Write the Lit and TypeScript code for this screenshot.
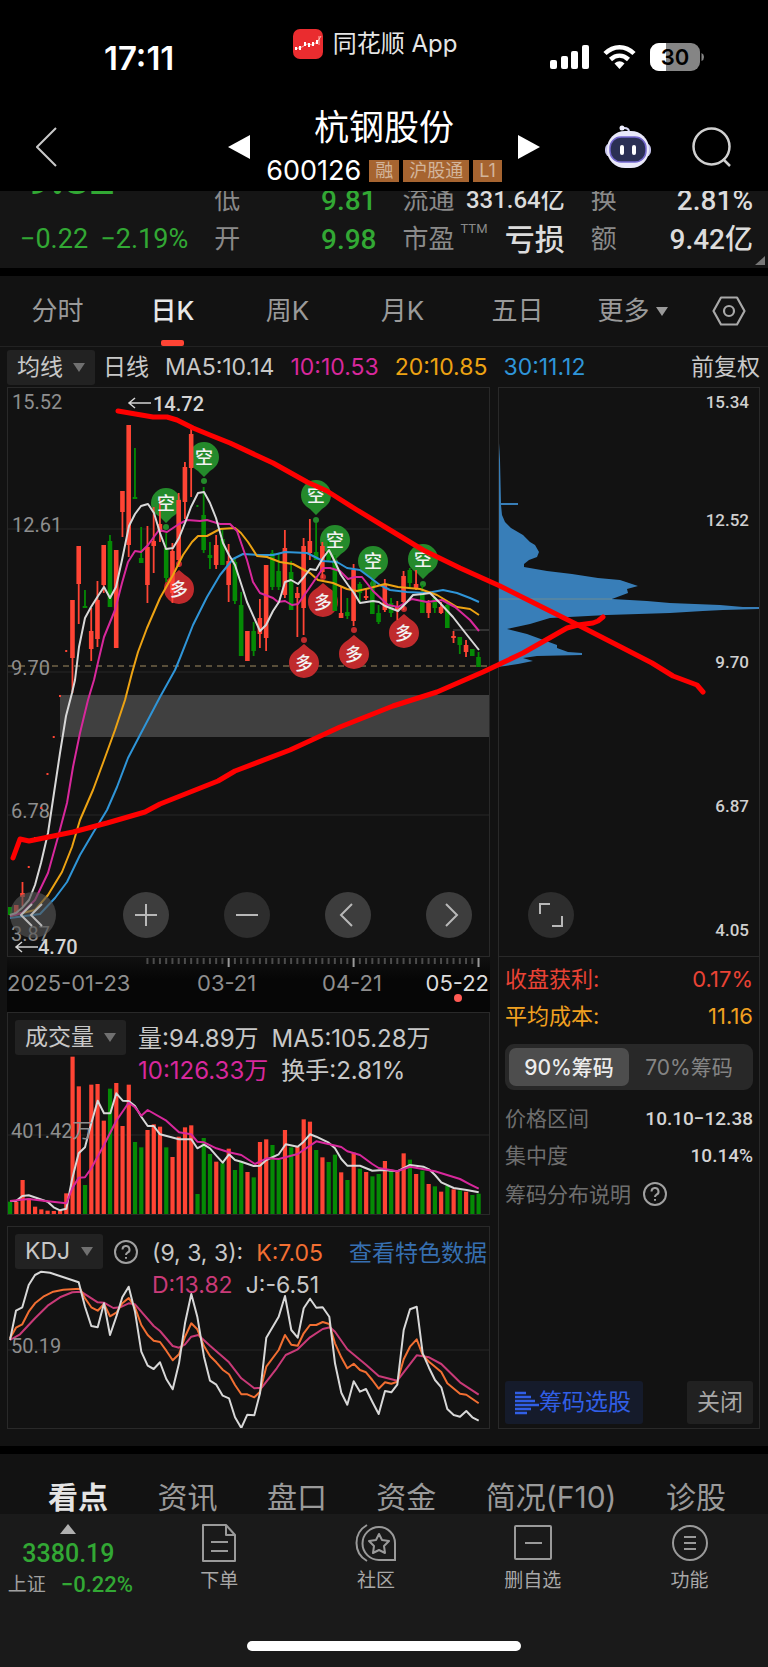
import { LitElement, html, svg, css } from "lit";
import { customElement, property, state } from "lit/decorators.js";
import { classMap } from "lit/directives/class-map.js";

type Point = [number, number];

const STEP = 6.247;
const barX = (i: number) => 10 + STEP * i;
const join = (points: Point[]) => points.map((p) => p.join(",")).join(" ");
/** Parses "x,y x,y" written in thirds of a pixel and moves it down by top. */
const thirds = (text: string, top: number) =>
  text
    .split(" ")
    .map((pair) => pair.split(",").map(Number))
    .map(([x, y]) => `${(x / 3).toFixed(1)},${(top + y / 3).toFixed(1)}`)
    .join(" ");

/* index, up/down, high, body top, body bottom, low */
const CANDLES: [number, "r" | "g", number, number, number, number][] = [
  [0, "g", 907, 907, 915, 915], [1, "r", 905, 905, 915, 915], [2, "r", 882, 893, 897, 906],
  [10, "r", 600, 600, 658, 693], [11, "r", 546, 546, 584, 624], [12, "g", 590, 606, 607, 608],
  [13, "r", 608, 631, 649, 661], [14, "r", 581, 600, 639, 647], [15, "r", 545, 545, 585, 593],
  [16, "g", 535, 541, 607, 607], [17, "r", 550, 550, 648, 648], [18, "r", 491, 491, 512, 537],
  [19, "r", 425, 425, 545, 557], [20, "g", 448, 497, 499, 499], [21, "g", 527, 558, 563, 563],
  [22, "r", 526, 547, 585, 603], [23, "r", 507, 541, 546, 573], [24, "r", 497, 524, 532, 542],
  [25, "g", 533, 548, 578, 582], [26, "r", 543, 551, 593, 603], [27, "r", 493, 500, 560, 567],
  [28, "r", 462, 467, 502, 519], [29, "r", 429, 434, 468, 497], [31, "g", 487, 515, 550, 553],
  [32, "g", 542, 555, 558, 569], [33, "r", 535, 545, 565, 569], [34, "g", 530, 539, 565, 565],
  [35, "r", 544, 561, 585, 602], [36, "g", 557, 562, 601, 604], [37, "g", 592, 605, 656, 656],
  [38, "r", 631, 631, 661, 661], [39, "g", 622, 631, 651, 656], [40, "r", 599, 618, 634, 648],
  [41, "r", 565, 565, 638, 651], [42, "g", 550, 553, 587, 590], [43, "g", 553, 571, 587, 590],
  [44, "r", 530, 548, 595, 598], [45, "g", 561, 572, 610, 610], [46, "r", 587, 593, 598, 637],
  [47, "r", 538, 546, 608, 635], [48, "r", 519, 541, 553, 560], [49, "g", 523, 552, 560, 560],
  [50, "r", 542, 546, 572, 578], [51, "g", 540, 550, 560, 562], [52, "g", 555, 562, 611, 611],
  [53, "r", 587, 613, 618, 618], [54, "g", 598, 612, 616, 619], [55, "r", 564, 570, 621, 626],
  [56, "g", 582, 584, 593, 603], [57, "r", 588, 596, 597, 600], [58, "g", 578, 587, 614, 614],
  [59, "g", 605, 613, 622, 624], [60, "r", 579, 585, 610, 612], [61, "g", 598, 603, 613, 617],
  [62, "r", 601, 607, 610, 620], [63, "r", 571, 576, 602, 610], [64, "g", 568, 570, 583, 587],
  [65, "r", 570, 584, 588, 590], [66, "g", 585, 592, 613, 613], [67, "r", 600, 603, 613, 618],
  [68, "g", 597, 598, 608, 613], [69, "r", 602, 607, 613, 614], [70, "g", 603, 605, 628, 628],
  [71, "r", 631, 636, 638, 643], [72, "g", 637, 637, 645, 654], [73, "r", 640, 645, 652, 657],
  [74, "g", 649, 649, 656, 656], [75, "g", 652, 657, 667, 667],
];

const LIMIT_DOTS: [number, number, "r" | "g"][] = [
  [3, 867, "r"], [4, 838, "r"], [5, 808, "r"], [6, 774, "r"], [7, 737, "r"],
  [8, 696, "r"], [9, 651, "r"], [30, 506, "g"],
];

const MA: Record<string, Point[]> = {
  ma30: [[10, 918], [40, 914], [55, 898], [67, 882], [80, 855], [93, 833], [107, 810], [117, 787], [128, 758], [140, 735], [160, 697], [175, 670], [180, 658], [193, 625], [207, 597], [220, 575], [233, 559], [243, 554], [260, 555], [273, 555], [285, 552], [307, 553], [323, 561], [337, 562], [347, 568], [360, 570], [368, 576], [380, 585], [390, 590], [407, 592], [427, 593], [443, 590], [457, 593], [470, 598], [479, 602]],
  ma20: [[10, 916], [35, 910], [48, 895], [62, 872], [72, 847], [80, 820], [93, 790], [103, 763], [115, 730], [125, 700], [132, 673], [138, 652], [147, 628], [160, 598], [173, 575], [183, 555], [192, 542], [198, 536], [207, 536], [220, 529], [235, 528], [241, 533], [248, 542], [257, 556], [267, 557], [280, 562], [293, 564], [310, 573], [318, 580], [333, 583], [347, 589], [357, 591], [370, 588], [385, 584], [398, 587], [420, 589], [437, 595], [457, 607], [470, 609], [479, 615]],
  ma10: [[10, 916], [22, 913], [35, 900], [48, 873], [58, 837], [67, 803], [73, 767], [80, 733], [88, 700], [94, 680], [99, 658], [104, 637], [115, 610], [122, 583], [128, 562], [135, 551], [141, 552], [148, 545], [159, 530], [167, 532], [179, 524], [187, 520], [200, 521], [207, 520], [220, 524], [230, 524], [237, 531], [247, 560], [253, 582], [260, 593], [273, 598], [278, 602], [285, 601], [292, 605], [298, 604], [310, 587], [323, 568], [330, 568], [340, 571], [348, 579], [355, 577], [362, 577], [373, 591], [388, 605], [398, 607], [412, 599], [427, 602], [442, 600], [455, 607], [470, 620], [479, 631]],
  ma5: [[10, 915], [16, 913], [22, 908], [29, 900], [35, 885], [41, 863], [48, 833], [54, 793], [60, 753], [66, 716], [72, 693], [75, 680], [79, 647], [85, 618], [91, 607], [98, 596], [104, 587], [110, 598], [116, 587], [122, 560], [129, 526], [135, 514], [141, 506], [148, 504], [154, 513], [160, 533], [166, 549], [173, 548], [179, 538], [185, 523], [191, 507], [198, 493], [204, 492], [210, 503], [216, 518], [223, 543], [229, 555], [235, 565], [247, 602], [260, 631], [266, 625], [273, 611], [279, 602], [285, 582], [291, 580], [298, 584], [304, 577], [310, 569], [316, 570], [323, 558], [329, 550], [335, 562], [341, 575], [348, 585], [354, 593], [360, 603], [373, 601], [379, 602], [385, 606], [398, 611], [407, 602], [413, 595], [423, 594], [430, 593], [440, 603], [453, 617], [467, 635], [479, 650]],
};

const SHORT_PINS: [number, number, number][] = [
  [204, 457, 481], [166, 503, 527], [316, 495, 520], [335, 540, 562], [373, 561, 584], [423, 559, 584],
];
const LONG_PINS: [number, number, number][] = [
  [179, 589, 564], [323, 602, 577], [304, 663, 640], [354, 654, 630], [404, 633, 609],
];

const CHIPS: Point[] = [
  [498, 443], [499, 443], [500, 460], [501, 503], [518, 503], [518, 505], [501, 505], [502, 515], [505, 522],
  [511, 528], [523, 535], [530, 542], [535, 545], [539, 552], [537, 557], [529, 560], [524, 564], [524, 567],
  [547, 571], [572, 574], [598, 578], [620, 580], [638, 586], [627, 589], [628, 593], [612, 599], [647, 601],
  [670, 603], [720, 605], [743, 607], [759, 607], [759, 609], [723, 610], [703, 611], [670, 613], [607, 615],
  [550, 618], [530, 624], [507, 629], [527, 634], [557, 645], [557, 648], [568, 652], [582, 653], [582, 655],
  [537, 656], [523, 658], [533, 661], [518, 664], [505, 666], [498, 667],
];

const TREND_DOWN: Point[] = [[118, 411], [153, 417], [167, 417], [177, 420], [193, 428], [210, 435], [230, 443], [260, 457], [273, 463], [307, 482], [327, 491], [357, 510], [390, 530], [423, 550], [460, 568], [500, 586], [528, 600], [578, 625], [617, 645], [652, 663], [673, 676], [697, 685], [703, 692]];
const TREND_UP: Point[] = [[13, 858], [20, 839], [29, 841], [73, 832], [107, 823], [145, 812], [160, 804], [218, 781], [235, 771], [290, 750], [340, 727], [393, 706], [437, 692], [483, 672], [523, 653], [567, 628], [578, 625], [593, 623], [598, 621], [603, 617]];

/* bar tops in thirds of a pixel, g marks a falling day */
const VOLUME =
  "g575 r575 r510 r565 r590 r598 r602 r603 r602 r550 r140 r229 g525 r224 r222 r332 g236 r219 r348 r224 g396 g412 r360 r343 r350 g412 r441 r380 r352 r346 g552 g384 g432 r455 g460 r416 g480 g456 r486 g502 r396 r388 g405 g450 r360 g412 r410 r328 r335 g420 r442 g456 g434 r487 g510 r428 g476 r486 g499 g492 r453 g482 r486 r430 g449 r492 g482 r522 g529 r545 g528 r538 g541 r545 g555 g551".split(" ");
const VOLUME_MA5 =
  "30,573 48,573 67,558 86,556 143,575 161,592 180,601 199,596 217,505 236,430 255,412 274,340 293,272 312,310 331,310 349,250 368,272 386,273 405,288 424,320 443,348 461,348 480,373 537,388 574,388 592,415 612,404 630,415 649,437 668,458 687,433 705,450 724,455 761,468 780,467 799,450 836,433 857,403 893,410 911,395 930,373 949,380 986,398 1005,415 1024,447 1042,467 1080,467 1117,482 1150,480 1192,484 1230,465 1270,470 1287,478 1305,495 1324,517 1361,534 1400,540 1436,547";
const VOLUME_MA10 =
  "30,573 86,567 130,572 199,580 217,535 236,503 255,502 274,475 312,405 349,332 386,278 405,292 424,317 443,300 499,332 537,367 574,373 592,395 612,397 649,415 687,427 724,435 765,462 800,445 836,447 893,432 949,394 1024,411 1042,424 1080,435 1117,462 1136,474 1192,484 1230,470 1305,484 1380,507 1410,523 1436,536";
const KDJ_J =
  "30,360 48,272 67,262 86,195 105,165 124,155 150,158 236,187 255,260 274,318 293,322 312,250 330,345 349,290 367,232 386,200 405,275 424,395 443,437 461,447 480,427 499,477 518,508 537,430 555,310 574,222 592,290 612,410 630,482 649,494 668,527 687,535 705,592 724,624 742,584 763,586 780,520 799,353 836,290 855,228 874,330 893,353 911,265 930,236 949,263 968,262 988,290 1005,430 1024,518 1042,554 1061,484 1080,515 1098,507 1117,545 1136,582 1155,513 1174,517 1192,494 1211,330 1230,268 1250,260 1268,400 1287,443 1305,480 1324,502 1342,567 1361,585 1380,590 1399,573 1417,592 1436,602";
const KDJ_K =
  "30,355 48,323 67,313 86,275 105,250 130,230 160,215 190,209 240,206 255,235 274,262 293,272 312,252 330,289 349,278 367,250 386,234 405,262 424,315 443,345 461,362 480,366 499,392 518,421 537,403 555,350 574,310 592,328 612,378 630,408 649,427 668,449 687,463 705,495 724,523 742,523 763,532 780,515 799,440 836,390 855,345 874,374 893,377 911,340 930,315 949,315 968,306 988,312 1005,370 1024,412 1042,445 1061,431 1080,450 1098,457 1117,480 1136,506 1155,487 1174,491 1192,485 1211,418 1230,380 1250,358 1268,405 1287,425 1324,456 1342,490 1380,521 1399,524 1436,550";
const KDJ_D =
  "30,360 60,343 105,295 143,257 180,232 217,217 243,215 293,247 312,248 340,264 360,262 386,250 405,253 461,318 480,333 518,378 537,383 555,373 574,350 595,345 630,377 687,427 724,475 763,505 785,503 830,445 857,405 893,388 930,352 968,327 990,322 1005,335 1042,388 1098,434 1136,468 1192,482 1250,406 1287,412 1324,432 1380,487 1436,524";

const base = css`
  * {
    box-sizing: border-box;
  }
  button,
  select {
    margin: 0;
    padding: 0;
    border: 0;
    background: none;
    color: inherit;
    font: inherit;
  }
  svg {
    display: block;
  }
  a {
    color: inherit;
    text-decoration: none;
  }
`;

const chartStyles = css`
  :host {
    display: block;
  }
  .chart {
    width: 100%;
    height: auto;
    font-family: Roboto, "Noto Sans CJK SC", sans-serif;
  }
  .grid {
    stroke: #262626;
    stroke-width: 1;
  }
  .line {
    fill: none;
    stroke-width: 2;
    stroke-linejoin: round;
  }
  .r {
    fill: #ff4434;
    stroke: #ff4434;
  }
  .g {
    fill: #058a05;
    stroke: #058a05;
  }
  .body,
  .dot {
    stroke: none;
  }
  .ma5 {
    stroke: #d8d8d8;
  }
  .ma10 {
    stroke: #d8289c;
  }
  .ma20 {
    stroke: #eda313;
  }
  .ma30 {
    stroke: #2f95d8;
  }
  .axis {
    fill: #8e8e8e;
    font-size: 20px;
  }
`;

@customElement("pick-box")
class PickBox extends LitElement {
  @property() label = "";
  @property({ attribute: false }) options: string[] = [];
  static styles = [
    base,
    css`
      :host {
        display: block;
        flex: none;
      }
      .box {
        display: flex;
        align-items: center;
        position: relative;
        height: 35px;
        border-radius: 3px;
        background: #222;
        color: #c8c8c8;
      }
      select {
        appearance: none;
        height: 35px;
        padding: 0 32px 0 10px;
        font-size: 23px;
        outline: none;
      }
      svg {
        position: absolute;
        right: 10px;
        width: 12px;
        height: 9px;
        pointer-events: none;
        fill: #707070;
      }
    `,
  ];
  render() {
    return html`<label class="box">
      <select aria-label=${this.label}>
        ${this.options.map((o) => html`<option>${o}</option>`)}
      </select>
      <svg viewBox="0 0 12 9"><path d="M0 0h12L6 9z" /></svg>
    </label>`;
  }
}

@customElement("price-chart")
class PriceChart extends LitElement {
  static styles = [
    base,
    chartStyles,
    css`
      .now {
        stroke: #a08c62;
        stroke-dasharray: 6 5;
      }
      .gap {
        fill: #404040;
      }
      .peak {
        fill: #d4d4d4;
        font-size: 20px;
        font-weight: 500;
      }
      .arrow {
        fill: none;
        stroke: #d4d4d4;
        stroke-width: 1.5;
      }
      .short {
        fill: #248a2b;
      }
      .long {
        fill: #c02a2c;
      }
      .pin {
        fill: #f2f2f2;
        font-size: 18px;
        font-weight: 500;
        text-anchor: middle;
      }
      .level {
        stroke: #555;
        stroke-width: 1;
      }
    `,
  ];
  render() {
    return html`<svg class="chart" viewBox="8 388 481 568" role="img" aria-label="日K线">
      ${[529, 672, 815].map((y) => svg`<line class="grid" x1="8" x2="489" y1=${y} y2=${y} />`)}
      <line class="level" x1="453" x2="489" y1="630" y2="630" />
      <rect class="gap" x="60" y="695" width="430" height="42" />
      <g class="axis">
        <text x="12" y="409">15.52</text>
        <text x="12" y="532">12.61</text>
        <text x="11" y="675">9.70</text>
        <text x="11" y="818">6.78</text>
        <text x="11" y="941">3.87</text>
      </g>
      <line class="now" x1="8" x2="489" y1="666" y2="666" />
      ${SHORT_PINS.map(
        ([x, y, dot]) => svg`<g class="short">
          <path d="M${x - 15} ${y}a15 15 0 1 1 30 0c0 7-4 11-9 14l-6 6-6-6c-5-3-9-7-9-14z" />
          <circle cx=${x} cy=${dot} r="3" />
        </g>`,
      )}
      ${LONG_PINS.map(
        ([x, y, dot]) => svg`<g class="long">
          <path d="M${x - 15} ${y}a15 15 0 1 0 30 0c0-7-4-11-9-14l-6-5-6 5c-5 3-9 7-9 14z" />
          <circle cx=${x} cy=${dot} r="3" />
        </g>`,
      )}
      ${CANDLES.map(([i, tone, high, top, bottom, low]) => {
        const x = barX(i);
        return svg`<g class=${tone}>
          <line x1=${x} x2=${x} y1=${high} y2=${low} stroke-width="1.800" />
          <rect class="body" x=${x - 2.3} y=${top} width="4.600" height=${Math.max(bottom - top, 2)} />
        </g>`;
      })}
      ${LIMIT_DOTS.map(
        ([i, y, tone]) => svg`<rect class="dot ${tone}" x=${barX(i) - 1} y=${y - 1} width="2" height="2" />`,
      )}
      ${Object.entries(MA).map(([name, points]) => svg`<polyline class="line ${name}" points=${join(points)} />`)}
      <g class="pin">
        ${SHORT_PINS.map(([x, y]) => svg`<text x=${x} y=${y + 7}>空</text>`)}
        ${LONG_PINS.map(([x, y]) => svg`<text x=${x} y=${y + 7}>多</text>`)}
      </g>
      <path class="arrow" d="M151 403h-22m6-5l-6 5 6 5M38 947H16m6-5l-6 5 6 5" />
      <g class="peak">
        <text x="153" y="411">14.72</text>
        <text x="38" y="954">4.70</text>
      </g>
    </svg>`;
  }
}

@customElement("date-axis")
class DateAxis extends LitElement {
  static styles = [
    base,
    chartStyles,
    css`
      :host {
        background: linear-gradient(#101010, #060606 40%);
      }
      .date {
        fill: #8e8e8e;
        font-family: Inter, sans-serif;
        font-size: 22px;
      }
      .last {
        fill: #dcdcdc;
        text-anchor: end;
      }
      .tick {
        stroke: #4c4c4c;
        stroke-width: 2;
      }
      .month {
        stroke: #9a9a9a;
      }
      .mark {
        fill: #ff5a54;
      }
    `,
  ];
  render() {
    const ticks = Array.from({ length: 54 }, (_, n) => n + 22);
    return html`<svg class="chart" viewBox="7 957 483 55">
      ${ticks.map((i) => {
        const month = [35, 55, 75].includes(i);
        return svg`<line class="tick ${month ? "month" : ""}" x1=${barX(i)} x2=${barX(i)} y1="958" y2=${month ? 967 : 964} />`;
      })}
      <g class="date">
        <text x="7" y="991">2025-01-23</text>
        <text x="197" y="991">03-21</text>
        <text x="322" y="991">04-21</text>
        <text class="last" x="489" y="991">05-22</text>
      </g>
      <circle class="mark" cx="458" cy="998" r="4" />
    </svg>`;
  }
}

@customElement("volume-chart")
class VolumeChart extends LitElement {
  static styles = [base, chartStyles];
  render() {
    return html`<svg class="chart" viewBox="8 1013 481 201" role="img" aria-label="成交量">
      <line class="grid" x1="8" x2="489" y1="1135" y2="1135" />
      ${VOLUME.map((entry, i) => {
        const top = 1010 + Number(entry.slice(1)) / 3;
        return svg`<rect class="body ${entry[0]}" x=${barX(i) - 2} y=${top} width="4.200" height=${1214 - top} />`;
      })}
      <polyline class="line ma5" points=${thirds(VOLUME_MA5, 1010)} />
      <polyline class="line ma10" points=${thirds(VOLUME_MA10, 1010)} />
      <text class="axis" x="11" y="1138">401.42万</text>
    </svg>`;
  }
}

@customElement("kdj-chart")
class KdjChart extends LitElement {
  static styles = [
    base,
    chartStyles,
    css`
      .k {
        stroke: #f26f32;
      }
      .d {
        stroke: #c93a78;
      }
    `,
  ];
  render() {
    return html`<svg class="chart" viewBox="8 1227 481 201" role="img" aria-label="KDJ">
      <line class="grid" x1="8" x2="489" y1="1350" y2="1350" />
      <polyline class="line d" points=${thirds(KDJ_D, 1220)} />
      <polyline class="line k" points=${thirds(KDJ_K, 1220)} />
      <polyline class="line ma5" points=${thirds(KDJ_J, 1220)} />
      <text class="axis" x="11" y="1353">50.19</text>
    </svg>`;
  }
}

@customElement("chip-chart")
class ChipChart extends LitElement {
  static styles = [
    base,
    chartStyles,
    css`
      .chips {
        fill: #387eb8;
      }
      .cost {
        stroke: #6f8c91;
      }
      .scale {
        fill: #cfcfcf;
        font-size: 17px;
        font-weight: 500;
        text-anchor: end;
      }
    `,
  ];
  render() {
    const scale: [string, number][] = [["15.34", 408], ["12.52", 526], ["9.70", 668], ["6.87", 812], ["4.05", 936]];
    return html`<svg class="chart" viewBox="499 388 260 568" role="img" aria-label="筹码分布">
      <polygon class="chips" points=${join(CHIPS)} />
      <line class="cost" x1="498" x2="612" y1="599" y2="599" />
      <g class="scale">${scale.map(([label, y]) => svg`<text x="749" y=${y}>${label}</text>`)}</g>
    </svg>`;
  }
}

const helpIcon = html`<svg class="help" viewBox="0 0 26 26">
  <circle cx="13" cy="13" r="11" />
  <path d="M9.500 10.500a3.500 3.500 0 1 1 5 3.200c-1 .6-1.500 1-1.500 2.300M13 18v1.800" />
</svg>`;

@customElement("app-root")
class AppRoot extends LitElement {
  @state() private period = "日K";
  @state() private section = "看点";
  @state() private share = "90%筹码";

  static styles = [
    base,
    css`
      :host {
        display: block;
        background: #121212;
        color: #c8c8c8;
        font-family: Inter, "Noto Sans CJK SC", sans-serif;
        line-height: 1;
      }
      .top {
        background: #000;
        color: #fff;
        height: 191px;
      }
      .status {
        display: grid;
        grid-template-columns: 1fr auto 1fr;
        align-items: start;
        height: 102px;
        padding: 28px 64px 0 104px;
      }
      .clock {
        padding-top: 14px;
        font-size: 33px;
        font-weight: 600;
      }
      .source {
        display: flex;
        align-items: center;
        gap: 10px;
        height: 32px;
        margin-right: 58px;
        color: #e6e6e6;
        font-size: 24px;
      }
      .signals {
        display: flex;
        align-items: center;
        justify-content: flex-end;
        gap: 14px;
        padding-top: 15px;
      }
      .title-bar {
        display: grid;
        grid-template-columns: 1fr auto 1fr;
        align-items: center;
        height: 89px;
        padding: 0 36px;
      }
      .stock {
        display: flex;
        align-items: center;
        gap: 16px;
      }
      .titles {
        padding-bottom: 4px;
      }
      .name {
        margin: 0 0 10px;
        font-size: 35px;
        font-weight: 400;
        line-height: 42px;
        text-align: center;
      }
      .code {
        display: flex;
        align-items: center;
        gap: 4px;
        font-size: 27px;
        line-height: 26px;
      }
      .code b {
        margin-right: 4px;
        font-weight: 400;
      }
      .tag {
        padding: 0 6px;
        background: #a66430;
        color: #d3b59b;
        font-size: 18px;
        line-height: 22px;
      }
      .tools {
        display: flex;
        align-items: center;
        justify-content: flex-end;
        gap: 40px;
      }
      .quote {
        display: grid;
        grid-template-columns: 168fr 162fr 162fr 162fr;
        grid-template-rows: 39px 39px;
        column-gap: 26px;
        align-content: end;
        align-items: center;
        position: relative;
        height: 77px;
        margin: 0;
        padding: 0 15px 9px 20px;
        overflow: hidden;
        background: #151515;
        font-family: Roboto, "Noto Sans CJK SC", sans-serif;
        font-weight: 500;
        font-size: 28px;
      }
      .stat {
        display: flex;
        align-items: center;
        justify-content: space-between;
        height: 39px;
        line-height: 39px;
        white-space: nowrap;
        color: #dcdcdc;
      }
      .stat dt {
        display: flex;
        color: #8a8a8a;
        font-size: 26px;
        font-weight: 400;
      }
      .stat dd {
        margin: 0;
      }
      .stat sup {
        margin-left: 6px;
        font-size: 13px;
        line-height: 18px;
      }
      .stat .loss {
        font-size: 30px;
      }
      .stat .small {
        font-size: 24px;
      }
      .green,
      .stat .green {
        color: #32a834;
      }
      .stat .last {
        padding: 0 0 42px 6px;
        font-size: 44px;
        font-weight: 700;
        line-height: 11px;
      }
      .stat .change {
        font-size: 27px;
        font-weight: 400;
      }
      .corner {
        position: absolute;
        right: 3px;
        bottom: 3px;
        fill: #777;
      }
      .band {
        height: 8px;
        background: #000;
      }
      .periods {
        display: grid;
        grid-template-columns: repeat(6, 115fr) 78fr;
        height: 71px;
        border-bottom: 1px solid #222;
      }
      .period {
        display: flex;
        align-items: center;
        justify-content: center;
        gap: 6px;
        position: relative;
        color: #9a9a9a;
        font-size: 26px;
      }
      .period.on {
        color: #e8e8e8;
        font-weight: 500;
      }
      .period.on::after {
        content: "";
        position: absolute;
        bottom: 0;
        width: 23px;
        height: 6px;
        border-radius: 2px;
        background: #ff4434;
      }
      .averages {
        display: flex;
        align-items: center;
        gap: 16px;
        height: 40px;
        padding: 0 8px 0 7px;
        font-size: 23px;
        white-space: nowrap;
      }
      .averages pick-box {
        margin-right: -8px;
      }
      .averages .right {
        margin-left: auto;
      }
      .pink {
        color: #d8289c;
      }
      .amber {
        color: #eda313;
      }
      .blue {
        color: #2f95d8;
      }
      .charts {
        display: grid;
        grid-template-columns: 483fr 262fr;
        gap: 8px;
        position: relative;
        padding: 0 8px 17px 7px;
      }
      .panel {
        display: grid;
        border: 1px solid #292929;
      }
      .panel > * {
        grid-area: 1 / 1;
        min-width: 0;
      }
      .volume {
        margin-bottom: 11px;
      }
      .controls {
        display: flex;
        align-self: end;
        gap: 55px;
        z-index: 1;
        padding: 0 17px 18px 2px;
      }
      .round {
        display: grid;
        place-items: center;
        width: 46px;
        height: 46px;
        border-radius: 50%;
        background: rgba(84, 84, 84, 0.65);
      }
      .round:first-child {
        margin-right: auto;
      }
      .round.off {
        background: #2d2d2d;
      }
      .round svg {
        width: 26px;
        height: 26px;
        fill: none;
        stroke: #b8b8b8;
        stroke-width: 2;
      }
      .legend {
        display: flex;
        align-items: start;
        gap: 12px;
        z-index: 1;
        align-self: start;
        padding: 7px 2px 0 7px;
        font-size: 24px;
        white-space: nowrap;
      }
      .facts {
        display: flex;
        flex-wrap: wrap;
        flex: 1;
        column-gap: 13px;
        line-height: 32px;
        padding-top: 3px;
      }
      .kdj .legend {
        gap: 10px;
      }
      .kdj .facts {
        font-size: 23px;
      }
      .orange {
        color: #f26f32;
      }
      .rose {
        color: #c93a78;
      }
      .link {
        margin-left: auto;
        color: #366fb0;
      }
      .help {
        width: 26px;
        height: 26px;
        fill: none;
        stroke: #a0a0a0;
        stroke-width: 2;
      }
      .legend .help {
        margin: 5px 3px 0 0;
      }
      .side {
        display: flex;
        flex-direction: column;
        border: 1px solid #292929;
      }
      .chip-map {
        display: grid;
        border-bottom: 1px solid #292929;
      }
      .chip-map > * {
        grid-area: 1 / 1;
      }
      .chip-map .round {
        align-self: end;
        margin: 0 0 18px 29px;
      }
      .details {
        display: flex;
        flex-direction: column;
        flex: 1;
        padding: 3px 6px 4px;
        font-size: 21px;
      }
      .row {
        display: flex;
        align-items: center;
        justify-content: space-between;
        height: 37px;
        color: #d4d4d4;
        white-space: nowrap;
      }
      .row b {
        font-family: Roboto, sans-serif;
        font-size: 19px;
        font-weight: 500;
      }
      .row.red {
        color: #ea4335;
        font-size: 22px;
      }
      .row.avg {
        color: #f0a020;
        font-size: 22px;
      }
      .row .dim {
        color: #6e6e6e;
      }
      .row.note {
        justify-content: flex-start;
        gap: 11px;
        height: 40px;
      }
      .segment {
        display: flex;
        height: 46px;
        margin: 10px 0;
        padding: 4px;
        border-radius: 9px;
        background: #282828;
      }
      .segment button {
        flex: 1;
        border-radius: 7px;
        color: #848484;
        white-space: nowrap;
      }
      .segment button.on {
        background: #4d4d4d;
        color: #ececec;
        font-weight: 500;
      }
      .actions {
        display: flex;
        justify-content: space-between;
        margin-top: auto;
        font-size: 23px;
        color: #a8a8a8;
      }
      .actions button {
        display: flex;
        align-items: center;
        height: 43px;
        padding: 0 10px;
        border-radius: 3px;
        background: #212121;
      }
      .actions .pick {
        padding: 0 12px 0 10px;
        background: #151b2b;
        color: #315fe6;
      }
      .drawing {
        position: absolute;
        z-index: 2;
        top: 0;
        left: 0;
        width: 100%;
        height: auto;
        pointer-events: none;
        fill: none;
        stroke: #f00;
        stroke-width: 5;
        stroke-linecap: round;
        stroke-linejoin: round;
      }
      .sections {
        display: flex;
        align-items: end;
        justify-content: space-between;
        height: 60px;
        padding: 0 42px 0 48px;
        color: #9a9a9a;
        font-size: 30px;
        line-height: 34px;
        white-space: nowrap;
      }
      .sections .on {
        color: #e4e4e4;
        font-weight: 700;
      }
      .dock {
        display: grid;
        grid-template-columns: 141fr repeat(4, 157fr);
        height: 127px;
        padding-top: 10px;
        background: #1a1a1a;
        font-size: 19px;
      }
      .index {
        display: flex;
        flex-direction: column;
        align-items: center;
        padding: 0 4px 0 0;
        white-space: nowrap;
      }
      .index strong {
        margin-top: 4px;
        font: 500 25px/32px Roboto, sans-serif;
      }
      .index .line {
        display: flex;
        gap: 15px;
        align-items: center;
        padding-left: 4px;
        font: 400 19px/30px Roboto, "Noto Sans CJK SC", sans-serif;
        color: #a0a0a0;
      }
      .index .line b {
        font-size: 22px;
        font-weight: 500;
      }
      .item {
        display: flex;
        flex-direction: column;
        align-items: center;
        gap: 9px;
        color: #a8a8a8;
      }
      .item svg {
        width: 42px;
        height: 38px;
        fill: none;
        stroke: #9a9a9a;
        stroke-width: 2;
      }
      .home {
        padding-bottom: 16px;
        background: #1a1a1a;
      }
      .home div {
        width: 274px;
        height: 10px;
        margin: 0 auto;
        border-radius: 5px;
        background: #fff;
      }
    `,
  ];

  private renderTop() {
    return html`<header class="top">
      <div class="status">
        <div class="clock">17:11</div>
        <div class="source">
          <svg width="30" height="30" viewBox="0 0 30 30">
            <rect width="30" height="30" rx="7" fill="#ea2c2f" />
            <path d="M2 20l7-2 5-3 6 1 5-4 3-5" fill="none" stroke="#ffb0a8" />
            <path d="M2 18h2v3H2zM6 17h2v4H6zM11 13h2v4h-2zM15 14h2v4h-2zM19 13h2v4h-2zM23 11h2v4h-2z" fill="#fff" />
            <path d="M26 7v9" stroke="#ffb0a8" />
          </svg>
          <span>同花顺 App</span>
        </div>
        <div class="signals">
          <svg width="39" height="26" viewBox="0 0 39 26" fill="#fff">
            <rect x="0" y="16" width="7" height="9" rx="2" />
            <rect x="11" y="12" width="7" height="13" rx="2" />
            <rect x="21" y="7" width="7" height="18" rx="2" />
            <rect x="32" y="1" width="7" height="24" rx="2" />
          </svg>
          <svg width="33" height="26" viewBox="0 0 33 26" fill="none" stroke="#fff" stroke-width="4.500">
            <path d="M2 9.500C10.500 1 22.500 1 31 9.500" />
            <path d="M7.500 15.500c5.500-5 12.500-5 18 0" />
            <path d="M11.500 19.500c3.500-3 6.500-3 10 0l-5 5.500z" fill="#fff" stroke="none" />
          </svg>
          <svg width="54" height="28" viewBox="0 0 54 28">
            <defs><clipPath id="cell"><rect width="50" height="28" rx="9" /></clipPath></defs>
            <g clip-path="url(#cell)">
              <rect width="50" height="28" fill="#858585" />
              <rect width="16" height="28" fill="#fff" />
            </g>
            <path d="M51.500 10q2.500 1 2.500 4t-2.500 4z" fill="#858585" />
            <text x="25" y="22" font-size="22" font-weight="600" text-anchor="middle" fill="#000">30</text>
          </svg>
        </div>
      </div>
      <div class="title-bar">
        <button aria-label="返回">
          <svg width="22" height="40" viewBox="0 0 22 40" fill="none" stroke="#c8c8c8" stroke-width="2">
            <path d="M20 1L1 20l19 19" />
          </svg>
        </button>
        <div class="stock">
          <button aria-label="上一只">
            <svg width="22" height="24" viewBox="0 0 22 24" fill="#fff"><path d="M22 0v24L0 12z" /></svg>
          </button>
          <div class="titles">
            <h1 class="name">杭钢股份</h1>
            <div class="code">
              <b>600126</b><span class="tag">融</span><span class="tag">沪股通</span><span class="tag">L1</span>
            </div>
          </div>
          <button aria-label="下一只">
            <svg width="22" height="24" viewBox="0 0 22 24" fill="#fff"><path d="M0 0v24l22-12z" /></svg>
          </button>
        </div>
        <div class="tools">
          <button aria-label="智能助手">
            <svg width="48" height="44" viewBox="0 0 48 44">
              <path d="M25 7q0-4-5-4" fill="none" stroke="#d8d8f4" stroke-width="2" />
              <circle cx="18" cy="3" r="2.500" fill="#f0f0ff" />
              <rect x="1" y="18" width="46" height="14" rx="6" fill="#c4c2ea" />
              <rect x="3" y="6" width="42" height="37" rx="18" fill="#e9e8fa" />
              <rect x="6" y="12" width="36" height="25" rx="11" fill="#2b3054" stroke="#7468cf" stroke-width="1.500" />
              <rect x="16" y="20" width="4" height="10" rx="2" fill="#fff" />
              <rect x="28" y="20" width="4" height="10" rx="2" fill="#fff" />
            </svg>
          </button>
          <button aria-label="搜索">
            <svg width="40" height="40" viewBox="0 0 40 40" fill="none" stroke="#d0d0d0" stroke-width="2.500">
              <circle cx="19.500" cy="19.500" r="18" />
              <path d="M31 32l7 7" />
            </svg>
          </button>
        </div>
      </div>
    </header>`;
  }

  private renderQuote() {
    return html`<dl class="quote">
        <div class="stat"><dd class="green last">9.82</dd></div>
        <div class="stat"><dt>低</dt><dd class="green">9.81</dd></div>
        <div class="stat"><dt>流通</dt><dd class="small">331.64亿</dd></div>
        <div class="stat"><dt>换</dt><dd>2.81%</dd></div>
        <div class="stat"><dd class="green change">−0.22</dd><dd class="green change">−2.19%</dd></div>
        <div class="stat"><dt>开</dt><dd class="green">9.98</dd></div>
        <div class="stat"><dt>市盈<sup>TTM</sup></dt><dd class="loss">亏损</dd></div>
        <div class="stat"><dt>额</dt><dd>9.42亿</dd></div>
        <svg class="corner" width="10" height="9" viewBox="0 0 10 9"><path d="M10 0v9H0z" /></svg>
      </dl>
      <div class="band"></div>`;
  }

  private renderPeriods() {
    return html`<nav class="periods">
        ${["分时", "日K", "周K", "月K", "五日", "更多"].map(
          (p) => html`<button
            class=${classMap({ period: true, on: p === this.period })}
            @click=${() => (this.period = p)}
          >
            ${p}${p === "更多"
              ? html`<svg width="12" height="9" viewBox="0 0 12 9" fill="#9a9a9a"><path d="M0 0h12L6 9z" /></svg>`
              : ""}
          </button>`,
        )}
        <button class="period" aria-label="设置">
          <svg width="34" height="30" viewBox="0 0 34 30" fill="none" stroke="#a8a8a8" stroke-width="2.200">
            <path d="M9 1.500h16L32.500 15 25 28.500H9L1.500 15z" stroke-linejoin="round" />
            <circle cx="17" cy="15" r="5" />
          </svg>
        </button>
      </nav>
      <div class="averages">
        <pick-box label="主图指标" .options=${["均线"]}></pick-box>
        <span>日线</span>
        <span>MA5:10.14</span>
        <span class="pink">10:10.53</span>
        <span class="amber">20:10.85</span>
        <span class="blue">30:11.12</span>
        <button class="right">前复权</button>
      </div>`;
  }

  private renderSide() {
    return html`<aside class="side">
      <div class="chip-map">
        <chip-chart></chip-chart>
        <button class="round off" aria-label="全屏">
          <svg viewBox="0 0 26 26"><path d="M2 12V2h10M24 14v10H14" /></svg>
        </button>
      </div>
      <div class="details">
        <div class="row red"><span>收盘获利:</span><span>0.17%</span></div>
        <div class="row avg"><span>平均成本:</span><span>11.16</span></div>
        <div class="segment">
          ${["90%筹码", "70%筹码"].map(
            (s) => html`<button class=${classMap({ on: s === this.share })} @click=${() => (this.share = s)}>${s}</button>`,
          )}
        </div>
        <div class="row"><span class="dim">价格区间</span><b>10.10−12.38</b></div>
        <div class="row"><span class="dim">集中度</span><b>10.14%</b></div>
        <div class="row note"><span class="dim">筹码分布说明</span>${helpIcon}</div>
        <div class="actions">
          <button class="pick">
            <svg width="24" height="24" viewBox="0 0 24 24" stroke="#315fe6" stroke-width="2.500">
              <path d="M0 2h11M0 6h16M0 10h20M0 14h24M0 18h16M0 22h12" />
            </svg>
            筹码选股
          </button>
          <button>关闭</button>
        </div>
      </div>
    </aside>`;
  }

  private renderCharts() {
    return html`<main class="charts">
      <div>
        <div class="panel">
          <price-chart></price-chart>
          <div class="controls">
            <button class="round" aria-label="最早"><svg viewBox="0 0 26 26"><path d="M12 2L1 13l11 11M22 2L11 13l11 11" /></svg></button>
            <button class="round" aria-label="放大"><svg viewBox="0 0 26 26"><path d="M13 2v22M2 13h22" /></svg></button>
            <button class="round off" aria-label="缩小"><svg viewBox="0 0 26 26"><path d="M2 13h22" /></svg></button>
            <button class="round" aria-label="左移"><svg viewBox="0 0 26 26"><path d="M17 2L6 13l11 11" /></svg></button>
            <button class="round" aria-label="右移"><svg viewBox="0 0 26 26"><path d="M10 2l11 11-11 11" /></svg></button>
          </div>
        </div>
        <date-axis></date-axis>
        <section class="panel volume">
          <volume-chart></volume-chart>
          <div class="legend">
            <pick-box label="副图指标" .options=${["成交量"]}></pick-box>
            <div class="facts">
              <span>量:94.89万</span><span>MA5:105.28万</span>
              <span class="pink">10:126.33万</span><span>换手:2.81%</span>
            </div>
          </div>
        </section>
        <section class="panel kdj">
          <kdj-chart></kdj-chart>
          <div class="legend">
            <pick-box label="副图指标" .options=${["KDJ"]}></pick-box>
            ${helpIcon}
            <div class="facts">
              <span>(9, 3, 3):</span><span class="orange">K:7.05</span>
              <a class="link" href="#data">查看特色数据</a>
              <span class="rose">D:13.82</span><span>J:-6.51</span>
            </div>
          </div>
        </section>
      </div>
      ${this.renderSide()}
      <svg class="drawing" viewBox="0 387 768 570">
        <polyline points=${join(TREND_DOWN)} />
        <polyline points=${join(TREND_UP)} />
      </svg>
    </main>`;
  }

  private renderDock() {
    return html`<div class="band"></div>
      <nav class="sections">
        ${["看点", "资讯", "盘口", "资金", "简况(F10)", "诊股"].map(
          (s) => html`<button class=${classMap({ on: s === this.section })} @click=${() => (this.section = s)}>${s}</button>`,
        )}
      </nav>
      <nav class="dock">
        <a class="index green" href="#index">
          <svg width="16" height="10" viewBox="0 0 16 10" fill="#b0b0b0"><path d="M8 0l8 10H0z" /></svg>
          <strong>3380.19</strong>
          <span class="line">上证 <b class="green">−0.22%</b></span>
        </a>
        <button class="item">
          <svg viewBox="0 0 42 38"><path d="M5 1h23l9 10v26H5zM28 1v10h9M13 18h17M13 27h17" stroke-linejoin="round" /></svg>
          下单
        </button>
        <button class="item">
          <svg viewBox="0 0 42 38">
            <path d="M12 1C-2 9-2 29 12 37M24 3a16.500 16.500 0 1 0 0 33h16V19A16 16 0 0 0 24 3z" />
            <path d="M24 10l3 6 7 1-5 5 1 7-6-3-6 3 1-7-5-5 7-1z" stroke-linejoin="round" />
          </svg>
          社区
        </button>
        <button class="item">
          <svg viewBox="0 0 42 38"><rect x="3" y="2" width="36" height="33" rx="1" /><path d="M13 19h17" /></svg>
          删自选
        </button>
        <button class="item">
          <svg viewBox="0 0 42 38"><circle cx="21" cy="19" r="17" /><path d="M15 13h12M15 19h12M15 25h12" /></svg>
          功能
        </button>
      </nav>
      <div class="home"><div></div></div>`;
  }

  render() {
    return html`${this.renderTop()}${this.renderQuote()}${this.renderPeriods()}${this.renderCharts()}${this.renderDock()}`;
  }
}
